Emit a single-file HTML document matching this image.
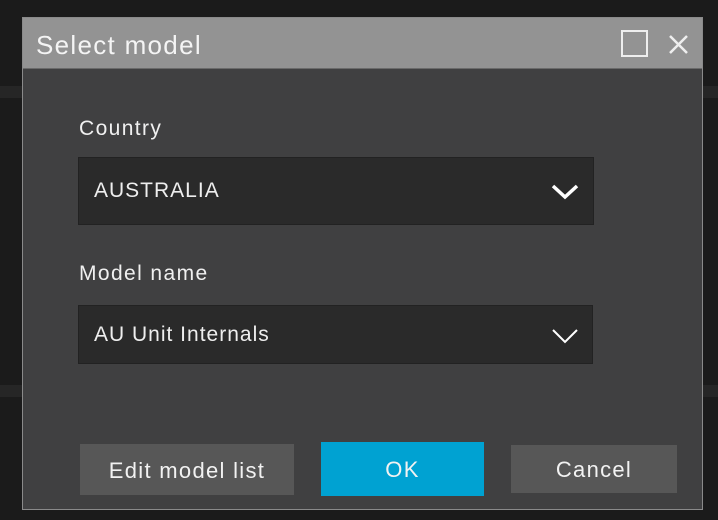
<!DOCTYPE html>
<html><head><style>
body{margin:0;width:718px;height:520px;background:#1b1b1b;position:relative;overflow:hidden;font-family:"Liberation Sans",sans-serif;color:#eee}
.band{position:absolute;left:0;width:718px;background:#262626}
.dlg{position:absolute;left:22px;top:17px;width:679px;height:491px;background:#404041;border:1px solid #8a8a8a}
.title{position:absolute;left:0;top:0;width:679px;height:50px;background:#939393;border-bottom:1px solid #6a6a6a}
.title span{position:absolute;left:13px;top:12px;font-size:26px;letter-spacing:1.3px;color:#f4f4f4}
.lbl{position:absolute;font-size:21px;letter-spacing:1.4px;color:#f0f0f0}
.sel{position:absolute;background:#2a2a2a;border:1px solid #222;font-size:21px;letter-spacing:1px}
.sel span{position:absolute;left:15px}
.btn{position:absolute;background:#575757;font-size:22px;letter-spacing:1.3px;text-align:center;color:#f2f2f2}
</style></head><body>
<div class="band" style="top:86px;height:12px"></div>
<div class="band" style="top:385px;height:12px"></div>
<div class="dlg">
<div class="title"><span>Select model</span>
<svg style="position:absolute;left:597px;top:11px" width="75" height="30"><rect x="2" y="2" width="25" height="25" fill="none" stroke="#eee" stroke-width="2"/><path d="M50 7L67 24M67 7L50 24" stroke="#eee" stroke-width="2.5"/></svg>
</div>
<div class="lbl" style="left:56px;top:99px">Country</div>
<div class="sel" style="left:55px;top:139px;width:514px;height:66px"><span style="top:21px">AUSTRALIA</span>
<svg style="position:absolute;left:472px;top:24px" width="30" height="20"><path d="M2 4L14 15L26 4" fill="none" stroke="#fff" stroke-width="3.5"/></svg></div>
<div class="lbl" style="left:56px;top:244px">Model name</div>
<div class="sel" style="left:55px;top:287px;width:513px;height:57px"><span style="top:17px">AU Unit Internals</span>
<svg style="position:absolute;left:472px;top:20px" width="30" height="20"><path d="M2 4L14 16L26 4" fill="none" stroke="#fff" stroke-width="2"/></svg></div>
<div class="btn" style="left:57px;top:426px;width:214px;height:51px;line-height:53px">Edit model list</div>
<div class="btn" style="left:298px;top:424px;width:163px;height:54px;line-height:56px;background:#00a2d2">OK</div>
<div class="btn" style="left:488px;top:427px;width:166px;height:48px;line-height:50px">Cancel</div>
</div>
</body></html>
